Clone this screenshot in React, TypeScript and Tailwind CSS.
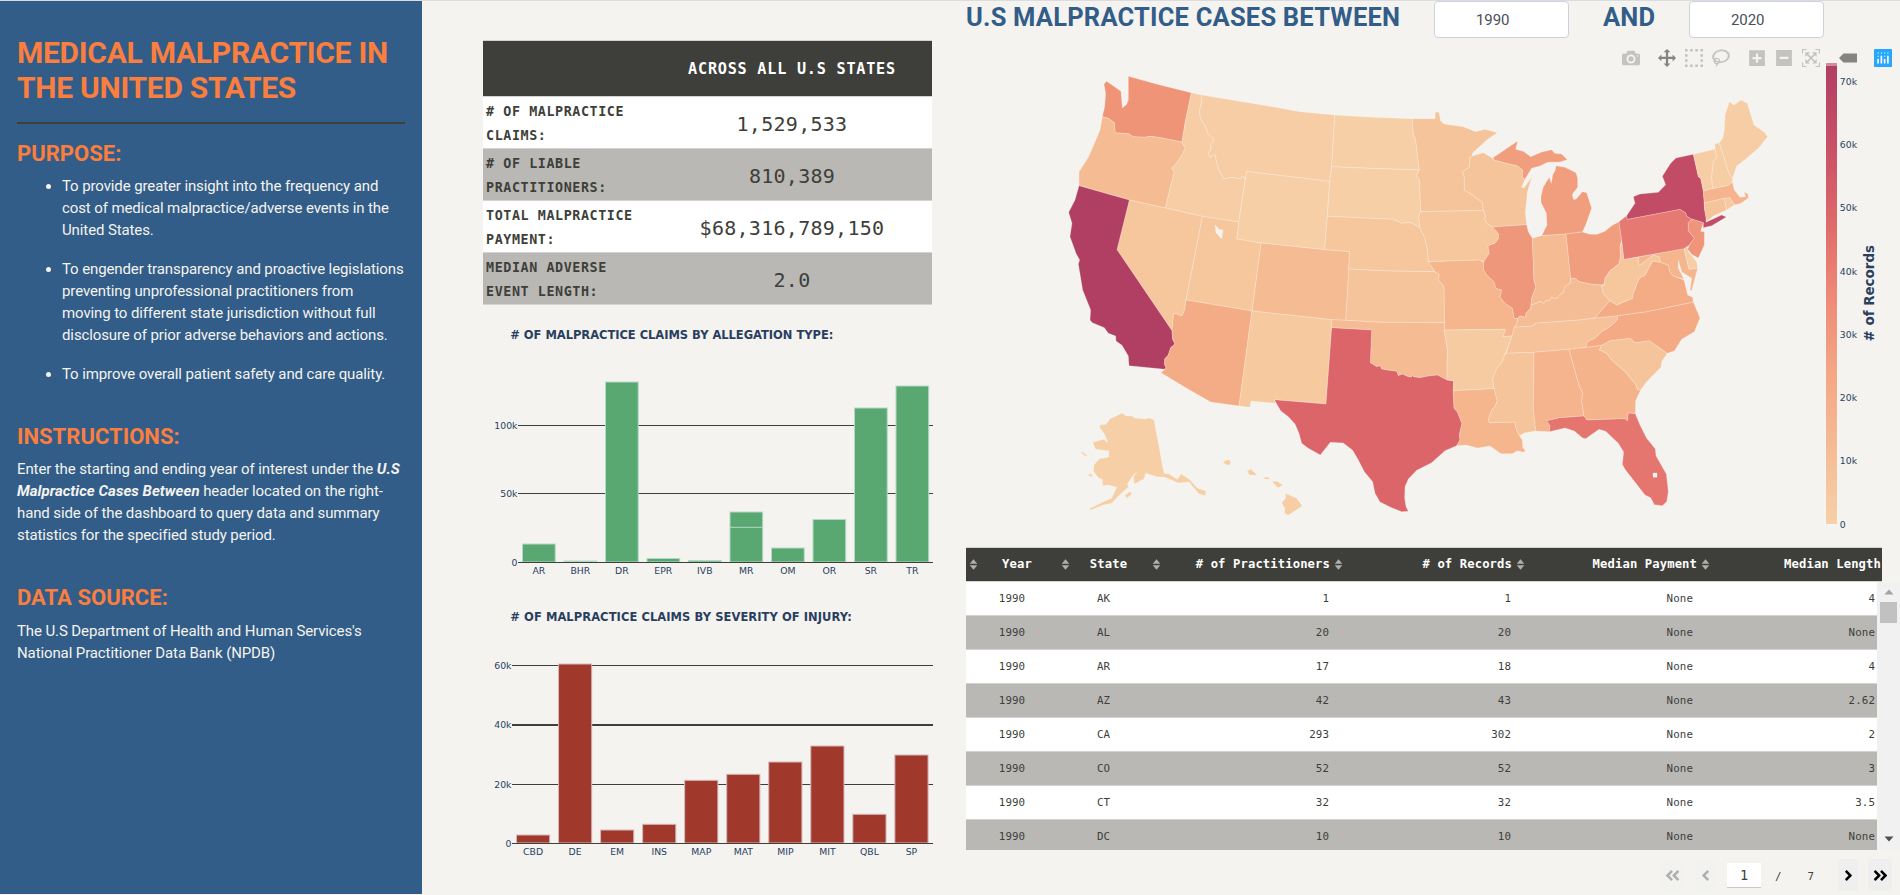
import React from "react";
import {
  FaAngleDoubleLeft,
  FaAngleDoubleRight,
  FaAngleLeft,
  FaAngleRight,
} from "react-icons/fa";

type Bar = { label: string; top: number; split?: number };

type State = { id: string; fill: string; d: string };

const MAP_STATES: State[] = [
  { id: "WA", fill: "#f09478", d: "M162 72L170 64L213 94L217 144L230 133L235 120L235 49L330 75L424 98L405 190L396 246L350 237L325 232L300 229L285 232L250 230L235 221L200 219L195 215L193 188L175 175L157 170L164 140L167 100Z" },
  { id: "OR", fill: "#f5bc94", d: "M157 170L175 175L193 188L195 215L200 219L235 221L250 230L285 232L300 229L325 232L350 237L396 246L406 265L400 278L385 303L366 325L373 338L360 385L347 444L238 420L87 377L87 335L115 292L132 253L150 210Z" },
  { id: "ID", fill: "#f6cda5", d: "M424 98L456 105L455 125L448 155L453 180L465 195L474 220L487 233L493 238L483 250L482 270L475 280L480 291L495 283L501 310L507 330L515 345L520 357L545 352L570 355L580 349L586 358L566 486L457 469L347 444L360 385L373 338L366 325L385 303L400 278L406 265L396 246L405 190Z" },
  { id: "MT", fill: "#f6cda5", d: "M456 105L550 121L650 137L750 155L854 165L845 320L839 364L590 334L586 358L580 349L570 355L545 352L520 357L515 345L507 330L501 310L495 283L480 291L475 280L482 270L483 250L493 238L487 233L474 220L465 195L453 180L448 155L455 125Z" },
  { id: "WY", fill: "#f6cfa6", d: "M590 334L839 364L832 469L824 569L633 549L560 537L566 486Z" },
  { id: "ND", fill: "#f6cfa6", d: "M854 165L970 172L1087 176L1090 220L1097 240L1103 290L1108 330L960 325L845 320Z" },
  { id: "SD", fill: "#f6cfa6", d: "M845 320L960 325L1108 330L1099 348L1109 360L1112 455L1106 468L1110 505L1100 498L1080 487L1055 490L1030 478L832 469L839 364Z" },
  { id: "NE", fill: "#f6c79d", d: "M832 469L1030 478L1055 490L1080 487L1100 498L1110 505L1125 535L1133 570L1135 605L1155 635L1010 633L896 627L898 575L824 569Z" },
  { id: "KS", fill: "#f5c49a", d: "M896 627L1010 633L1155 635L1168 643L1165 660L1182 678L1184 788L990 787L887 781Z" },
  { id: "CO", fill: "#f5bb93", d: "M633 549L824 569L898 575L896 627L887 781L845 779L606 753Z" },
  { id: "UT", fill: "#f6c79d", d: "M457 469L566 486L560 537L633 549L606 753L408 720ZM495 495L498 518L515 537L519 509L510 510Z" },
  { id: "NV", fill: "#f6c79d", d: "M238 420L347 444L457 469L408 720L404 750L396 768L373 760L370 770L366 812L201 569Z" },
  { id: "CA", fill: "#b13f63", d: "M87 377L238 420L201 569L366 812L368 838L375 852L362 863L355 885L344 897L344 915L348 922L345 928L237 917L235 888L216 856L198 843L197 828L175 820L163 803L127 788L120 780L122 750L98 690L85 612L89 600L78 580L60 530L66 490L56 457L75 420Z" },
  { id: "AZ", fill: "#f4ac86", d: "M408 720L606 753L567 1038L482 1026L410 985L333 938L345 928L348 922L344 915L344 897L355 885L362 863L375 852L368 838L366 812L370 770L373 760L396 768L404 750Z" },
  { id: "NM", fill: "#f6c99f", d: "M606 753L845 779L845 803L828 1032L673 1019L675 1030L603 1023L600 1042L567 1038Z" },
  { id: "OK", fill: "#f5bb93", d: "M845 779L887 781L990 787L1184 788L1183 810L1192 870L1191 960L1162 945L1130 949L1110 953L1090 950L1087 946L1084 951L1075 950L1057 942L1045 947L1040 934L1010 930L995 927L990 917L980 920L961 908L965 810L845 803Z" },
  { id: "TX", fill: "#dc656a", d: "M845 803L965 810L961 908L980 920L990 917L995 927L1010 930L1040 934L1045 947L1057 942L1075 950L1084 951L1087 946L1090 950L1110 953L1130 949L1162 945L1191 960L1211 962L1210 992L1212 1045L1222 1055L1236 1090L1228 1125L1230 1140L1220 1157L1185 1172L1145 1208L1100 1231L1075 1257L1065 1280L1064 1315L1068 1340L1075 1354L1055 1355L1025 1343L990 1326L975 1300L968 1265L943 1235L925 1200L908 1171L880 1149L841 1147L811 1185L775 1165L755 1150L747 1120L735 1092L715 1070L692 1052L673 1019L828 1032Z" },
  { id: "MN", fill: "#f5c49a", d: "M1087 176L1155 176L1156 156L1167 157L1172 183L1183 192L1240 200L1277 215L1305 208L1342 218L1310 240L1267 280L1267 288L1259 293L1258 322L1238 335L1243 352L1243 390L1265 403L1298 428L1300 451L1112 455L1109 360L1099 348L1108 330L1103 290L1097 240L1090 220Z" },
  { id: "IA", fill: "#f6c79d", d: "M1112 455L1300 451L1307 468L1304 478L1310 490L1328 501L1346 522L1345 537L1335 550L1314 557L1318 580L1301 605L1290 600L1135 605L1133 570L1125 535L1110 505L1106 468Z" },
  { id: "WI", fill: "#f5c49a", d: "M1267 288L1300 278L1325 293L1333 300L1370 310L1402 317L1418 330L1417 352L1425 358L1415 382L1422 384L1446 350L1432 395L1426 460L1430 494L1328 501L1310 490L1304 478L1307 468L1300 451L1298 428L1265 403L1243 390L1243 352L1238 335L1258 322L1259 293Z" },
  { id: "MI", fill: "#f19e7e", d: "M1329 293L1403 243L1397 268L1420 274L1442 290L1475 276L1505 269L1514 280L1535 282L1552 299L1530 306L1493 307L1470 318L1445 325L1425 358L1417 352L1418 330L1402 317L1370 310L1333 300ZM1518 317L1545 322L1578 338L1583 355L1583 382L1567 403L1570 418L1578 418L1597 395L1610 398L1625 445L1607 495L1597 516L1548 522L1475 527L1491 495L1489 460L1473 427L1473 408L1480 380L1498 352L1504 370L1508 345L1516 330Z" },
  { id: "MO", fill: "#f5b58d", d: "M1135 605L1290 600L1301 608L1301 630L1310 645L1332 665L1338 685L1355 690L1350 712L1365 730L1387 745L1393 775L1403 775L1401 790L1393 802L1386 828L1359 830L1366 808L1183 810L1184 788L1182 678L1165 660L1168 643L1155 635Z" },
  { id: "IL", fill: "#ef977a", d: "M1328 501L1430 494L1435 515L1447 535L1452 660L1458 680L1445 715L1443 735L1442 745L1428 760L1427 772L1410 768L1403 775L1393 775L1387 745L1365 730L1350 712L1355 690L1338 685L1332 665L1310 645L1301 630L1301 605L1318 580L1314 557L1335 550L1345 537L1346 522Z" },
  { id: "IN", fill: "#f5bb93", d: "M1447 535L1475 527L1548 522L1562 655L1562 668L1545 680L1540 695L1525 710L1518 717L1505 711L1499 723L1490 720L1480 730L1470 724L1460 730L1443 735L1445 715L1458 680L1452 660Z" },
  { id: "OH", fill: "#f19e7e", d: "M1548 522L1597 516L1620 523L1642 523L1665 514L1685 497L1707 485L1715 540L1710 560L1712 590L1707 612L1680 632L1665 655L1663 673L1655 675L1620 672L1588 665L1575 655L1562 655Z" },
  { id: "KY", fill: "#f5bd95", d: "M1403 775L1410 768L1427 772L1428 760L1442 745L1443 735L1460 730L1470 724L1480 730L1490 720L1499 723L1505 711L1518 717L1525 710L1540 695L1545 680L1562 668L1562 655L1575 655L1588 665L1620 672L1655 675L1655 680L1660 700L1680 722L1655 750L1635 774L1590 780L1455 790L1450 798L1393 802L1401 790Z" },
  { id: "TN", fill: "#f5c29a", d: "M1393 802L1450 798L1455 790L1590 780L1635 774L1702 767L1702 780L1680 800L1655 815L1635 835L1612 845L1608 862L1557 868L1452 877L1368 880L1380 845L1386 828Z" },
  { id: "AR", fill: "#f6cba2", d: "M1183 810L1366 808L1359 830L1386 828L1380 845L1368 875L1362 890L1355 910L1340 925L1328 955L1332 986L1210 992L1211 962L1191 960L1192 870Z" },
  { id: "LA", fill: "#f5b58d", d: "M1210 992L1332 986L1342 1022L1335 1040L1325 1050L1315 1078L1318 1088L1395 1086L1398 1105L1408 1127L1417 1140L1418 1162L1426 1172L1420 1177L1402 1172L1387 1181L1353 1181L1320 1158L1282 1164L1248 1155L1220 1157L1230 1140L1228 1125L1236 1090L1222 1055L1212 1045Z" },
  { id: "MS", fill: "#f5c49a", d: "M1368 880L1452 877L1450 1045L1457 1113L1425 1118L1408 1127L1398 1105L1395 1086L1318 1088L1315 1078L1325 1050L1335 1040L1342 1022L1332 986L1328 955L1340 925L1355 910L1362 890Z" },
  { id: "AL", fill: "#f5b48d", d: "M1452 877L1557 868L1587 975L1598 1000L1595 1025L1602 1068L1530 1073L1490 1082L1500 1097L1498 1115L1457 1113L1450 1045Z" },
  { id: "GA", fill: "#f5b38c", d: "M1557 868L1608 862L1655 856L1648 870L1670 880L1685 900L1725 935L1738 950L1758 975L1762 988L1772 990L1757 1022L1756 1061L1735 1059L1733 1083L1725 1076L1610 1080L1602 1068L1595 1025L1598 1000L1587 975Z" },
  { id: "FL", fill: "#e5766f", d: "M1490 1082L1530 1073L1602 1068L1610 1080L1725 1076L1733 1083L1735 1059L1756 1061L1770 1095L1790 1135L1816 1167L1818 1187L1849 1242L1855 1295L1850 1325L1837 1337L1813 1334L1802 1313L1785 1305L1725 1228L1717 1213L1721 1176L1705 1150L1667 1114L1647 1108L1607 1136L1598 1134L1573 1113L1545 1104L1498 1115L1500 1097ZM1809 1239L1809 1252L1821 1252L1821 1239Z" },
  { id: "SC", fill: "#f5c49a", d: "M1655 856L1680 842L1740 835L1755 848L1798 842L1852 880L1835 905L1833 922L1790 965L1772 990L1762 988L1758 975L1738 950L1725 935L1685 900L1670 880L1648 870Z" },
  { id: "NC", fill: "#f4aa84", d: "M1702 767L1790 755L1930 726L1950 774L1933 815L1895 838L1873 873L1852 880L1798 842L1755 848L1740 835L1680 842L1655 856L1608 862L1612 845L1635 835L1655 815L1680 800L1702 780Z" },
  { id: "VA", fill: "#f4ac86", d: "M1680 722L1700 735L1747 715L1750 700L1767 655L1785 645L1808 603L1832 607L1855 615L1860 635L1870 648L1902 660L1913 705L1928 712L1930 726L1790 755L1702 767L1635 774L1655 750Z" },
  { id: "WV", fill: "#f6c79d", d: "M1715 548L1722 598L1765 591L1767 617L1790 600L1810 585L1828 590L1832 607L1808 603L1785 645L1767 655L1750 700L1747 715L1700 735L1680 722L1660 700L1655 680L1663 673L1665 655L1680 632L1707 612L1712 590L1710 560Z" },
  { id: "MD", fill: "#f5b58d", d: "M1765 591L1902 566L1917 628L1943 624L1935 655L1925 692L1920 690L1925 655L1895 635L1885 600L1885 625L1902 658L1870 648L1860 635L1855 615L1832 607L1828 590L1810 585L1790 600L1767 617Z" },
  { id: "DE", fill: "#f6cda5", d: "M1902 566L1913 562L1915 575L1940 605L1943 624L1917 628Z" },
  { id: "PA", fill: "#e67972", d: "M1707 485L1730 467L1732 478L1890 448L1907 458L1910 468L1925 477L1915 490L1915 512L1933 535L1918 555L1902 566L1722 598L1715 540Z" },
  { id: "NY", fill: "#c24b65", d: "M1730 467L1755 430L1750 410L1770 402L1825 397L1847 374L1837 349L1862 310L1878 294L1930 283L1938 318L1945 350L1952 355L1960 393L1964 450L1968 470L1968 487L2015 465L2029 471L1985 497L1960 503L1960 488L1925 477L1910 468L1907 458L1890 448L1732 478Z" },
  { id: "NJ", fill: "#f0957a", d: "M1925 477L1960 488L1952 514L1963 515L1963 555L1945 594L1925 583L1913 568L1918 555L1933 535L1915 512L1915 490Z" },
  { id: "VT", fill: "#f6cda5", d: "M1930 283L1995 267L2000 290L1990 305L1985 350L1988 386L1960 393L1952 355L1945 350L1938 318Z" },
  { id: "NH", fill: "#f6cda5", d: "M1995 267L1995 252L2008 248L2037 340L2048 355L2047 366L2033 377L1988 386L1985 350L1990 305L2000 290Z" },
  { id: "ME", fill: "#f6cda5", d: "M2008 248L2018 235L2023 210L2025 165L2038 125L2052 135L2073 120L2092 130L2112 195L2143 217L2153 230L2125 265L2090 295L2060 318L2048 355L2037 340Z" },
  { id: "MA", fill: "#f5b48d", d: "M1960 393L1988 386L2033 377L2047 366L2053 390L2070 412L2087 410L2082 396L2094 402L2095 414L2073 430L2053 435L2040 413L2023 415L1963 429Z" },
  { id: "CT", fill: "#f5c49a", d: "M1963 429L2023 415L2030 450L1990 468L1970 484L1964 450Z" },
  { id: "RI", fill: "#f6c99f", d: "M2023 415L2040 413L2053 435L2030 450Z" },
  { id: "AK", fill: "#f6cfa6", d: "M148 1100L152 1094L168 1093L180 1076L200 1067L217 1059L228 1068L245 1067L252 1073L285 1077L298 1074L312 1079L342 1240L358 1242L382 1258L393 1241L417 1257L443 1285L467 1292L467 1307L447 1302L417 1266L385 1269L345 1252L320 1250L287 1240L282 1257L253 1272L250 1250L260 1237L248 1248L232 1272L236 1280L205 1308L185 1330L160 1335L122 1350L118 1346L160 1325L185 1315L200 1282L175 1275L158 1277L157 1258L145 1253L130 1233L132 1215L148 1196L175 1192L177 1173L137 1168L128 1147L160 1138L173 1147L165 1125ZM225 1305L240 1295L246 1302L230 1315ZM91 1175L100 1177L113 1188L105 1188ZM113 1243L125 1242L129 1250L120 1250Z" },
  { id: "HI", fill: "#f6cda5", d: "M518 1207L532 1199L541 1201L541 1213L532 1216ZM591 1234L603 1227L621 1246L599 1245ZM637 1255L650 1251L664 1256L650 1258ZM666 1265L680 1263L699 1275L684 1284ZM706 1300L740 1315L757 1338L715 1366L704 1360L704 1345L695 1328L707 1315Z" },
];

const COLORBAR_TICKS = [
  { y: 85, label: "70k" },
  { y: 148, label: "60k" },
  { y: 211, label: "50k" },
  { y: 274.5, label: "40k" },
  { y: 338, label: "30k" },
  { y: 401, label: "20k" },
  { y: 464, label: "10k" },
  { y: 528, label: "0" },
];

const ALLEGATION: Bar[] = [
  { label: "AR", top: 544 },
  { label: "BHR", top: 561 },
  { label: "DR", top: 382 },
  { label: "EPR", top: 558.5 },
  { label: "IVB", top: 560.5 },
  { label: "MR", top: 512, split: 527.3 },
  { label: "OM", top: 548 },
  { label: "OR", top: 519.5 },
  { label: "SR", top: 408 },
  { label: "TR", top: 386 },
];

const SEVERITY: Bar[] = [
  { label: "CBD", top: 835 },
  { label: "DE", top: 664 },
  { label: "EM", top: 830 },
  { label: "INS", top: 824.3 },
  { label: "MAP", top: 780.3 },
  { label: "MAT", top: 774.3 },
  { label: "MIP", top: 762 },
  { label: "MIT", top: 746 },
  { label: "QBL", top: 814.3 },
  { label: "SP", top: 755 },
];

const SUMMARY = [
  { label: ["# OF MALPRACTICE", "CLAIMS:"], value: "1,529,533" },
  { label: ["# OF LIABLE", "PRACTITIONERS:"], value: "810,389" },
  { label: ["TOTAL MALPRACTICE", "PAYMENT:"], value: "$68,316,789,150" },
  { label: ["MEDIAN ADVERSE", "EVENT LENGTH:"], value: "2.0" },
];

const ROWS = [
  ["1990", "AK", "1", "1", "None", "4"],
  ["1990", "AL", "20", "20", "None", "None"],
  ["1990", "AR", "17", "18", "None", "4"],
  ["1990", "AZ", "42", "43", "None", "2.62"],
  ["1990", "CA", "293", "302", "None", "2"],
  ["1990", "CO", "52", "52", "None", "3"],
  ["1990", "CT", "32", "32", "None", "3.5"],
  ["1990", "DC", "10", "10", "None", "None"],
];

const HEADERS = ["Year", "State", "# of Practitioners", "# of Records", "Median Payment", "Median Length"];

const HEADING = "font-bold text-[#fa7e3e] text-[22px] leading-[26px] tracking-[0.03px]";

function Sidebar() {
  return (
    <aside className="h-[893px] w-[422px] shrink-0 bg-[#325d88] pl-[17px] pr-[17px] pt-[34px] font-['Roboto',sans-serif] text-[15px] leading-[22px] tracking-[-0.11px] text-[#f4f3ef]">
      <h1 className="whitespace-nowrap text-[30px] font-bold leading-[35px] tracking-[-0.27px] text-[#fa7e3e]">
        MEDICAL MALPRACTICE IN
        <br />
        THE UNITED STATES
      </h1>
      <hr className="mt-[17px] h-[2px] border-0 bg-[#3e3f3a]" />
      <h2 className={`mt-[17px] ${HEADING}`}>PURPOSE:</h2>
      <ul className="mt-[8px] flex list-disc flex-col gap-[17px] whitespace-nowrap pl-[45px]">
        <li>
          To provide greater insight into the frequency and
          <br />
          cost of medical malpractice/adverse events in the
          <br />
          United States.
        </li>
        <li>
          To engender transparency and proactive legislations
          <br />
          preventing unprofessional practitioners from
          <br />
          moving to different state jurisdiction without full
          <br />
          disclosure of prior adverse behaviors and actions.
        </li>
        <li>To improve overall patient safety and care quality.</li>
      </ul>
      <h2 className={`mt-[39px] ${HEADING}`}>INSTRUCTIONS:</h2>
      <p className="mt-[8px] whitespace-nowrap">
        Enter the starting and ending year of interest under the{" "}
        <b className="italic tracking-[0.05px]">
          U.S
          <br />
          Malpractice Cases Between
        </b>{" "}
        header located on the right-
        <br />
        hand side of the dashboard to query data and summary
        <br />
        statistics for the specified study period.
      </p>
      <h2 className={`mt-[39px] ${HEADING}`}>DATA SOURCE:</h2>
      <p className="mt-[9px] whitespace-nowrap">
        The U.S Department of Health and Human Services's
        <br />
        National Practitioner Data Bank (NPDB)
      </p>
    </aside>
  );
}

function SummaryTable() {
  return (
    <div className="ml-[61px] mt-[39px] w-[449px] border-t border-[#d3d3d3] font-['DejaVu_Sans_Mono',monospace] text-[#3e3f3a]">
      <div className="flex h-[56px] items-center border-b border-[#d3d3d3] bg-[#3e3f3a]">
        <div className="w-[169px]" />
        <div className="flex-1 pt-px text-center text-[15.2px] font-bold tracking-[0.75px] text-white">
          ACROSS ALL U.S STATES
        </div>
      </div>
      {SUMMARY.map((row, i) => (
        <div
          key={row.value}
          className={`flex h-[52px] items-center border-b border-[#d3d3d3] ${i % 2 ? "bg-[#b9b8b4]" : "bg-white"}`}
        >
          <div className="w-[169px] whitespace-nowrap pl-[3px] pt-[3px] text-[13.4px] font-bold leading-[24px] tracking-[0.57px]">
            {row.label[0]}
            <br />
            {row.label[1]}
          </div>
          <div className="flex-1 pt-[3px] text-center text-[20px] tracking-[0.28px]">{row.value}</div>
        </div>
      ))}
    </div>
  );
}

type BarChartProps = {
  viewBox: string;
  height: string;
  title: string;
  titleY: number;
  titleWidth: number;
  bars: Bar[];
  x0: number;
  step: number;
  barWidth: number;
  base: number;
  axisX: number;
  fill: string;
  edge: string;
  ticks: { y: number; label: string; weight?: number }[];
};

function BarChart(p: BarChartProps) {
  return (
    <svg
      viewBox={p.viewBox}
      className={`w-[530px] ${p.height} block font-['Verdana','DejaVu_Sans',sans-serif]`}
      fill="#2a3f5f"
    >
      <text x="510.3" y={p.titleY} fontSize="11.5" fontWeight="700" textLength={p.titleWidth}>
        {p.title}
      </text>
      {p.ticks.map((t) => (
        <g key={t.label}>
          <rect x={p.axisX} y={t.y} width={933 - p.axisX} height={t.weight ?? 1} fill="#3e3f3a" />
          <text x={p.axisX - 0.5} y={t.y + 3.8} fontSize="9.3" textAnchor="end">
            {t.label}
          </text>
        </g>
      ))}
      {p.bars.map((b, i) => {
        const x = p.x0 + i * p.step;
        return (
          <g key={b.label}>
            <rect
              x={x}
              y={b.top}
              width={p.barWidth}
              height={p.base - b.top}
              fill={p.fill}
              stroke={p.edge}
            />
            {b.split && <rect x={x} y={b.split - 0.5} width={p.barWidth} height="1" fill={p.edge} />}
            <text x={x + p.barWidth / 2} y={p.base + 12} fontSize="9.3" textAnchor="middle">
              {b.label}
            </text>
          </g>
        );
      })}
      <rect x={p.axisX} y={p.base} width={933 - p.axisX} height="1" fill="#3e3f3a" />
    </svg>
  );
}

const ICONS = {
  camera:
    "m500 450c-83 0-150-67-150-150 0-83 67-150 150-150 83 0 150 67 150 150 0 83-67 150-150 150z m400 150h-120c-16 0-34 13-39 29l-31 93c-6 15-23 28-40 28h-340c-16 0-34-13-39-28l-31-94c-6-15-23-28-40-28h-120c-55 0-100-45-100-100v-450c0-55 45-100 100-100h800c55 0 100 45 100 100v450c0 55-45 100-100 100z m-400-550c-138 0-250 112-250 250 0 138 112 250 250 250 138 0 250-112 250-250 0-138-112-250-250-250z m365 380c-19 0-35 16-35 35 0 19 16 35 35 35 19 0 35-16 35-35 0-19-16-35-35-35z",
  pan: "m1000 350l-187 188 0-125-250 0 0 250 125 0-188 187-187-187 125 0 0-250-250 0 0 125-188-188 186-187 0 125 252 0 0-250-125 0 187-188 188 188-125 0 0 250 250 0 0-126 187 188z",
  select:
    "M0 850h143v-143h-143zM286 850h143v-143h-143zM571 850h143v-143h-143zM857 850h143v-143h-143zM0 564h143v-143h-143zM857 564h143v-143h-143zM0 279h143v-143h-143zM857 279h143v-143h-143zM0 -7h143v-143h-143zM286 -7h143v-143h-143zM571 -7h143v-143h-143zM857 -7h143v-143h-143z",
  lasso:
    "m1018 538c-36 207-290 336-568 286-277-48-473-256-436-463 10-57 36-108 76-151-13-66 11-137 68-183 34-28 75-41 114-42l-55-70 0 0c-2-1-3-2-4-3-10-14-8-34 5-45 14-11 34-8 45 4 1 1 2 3 2 5l0 0 113 140c16 11 31 24 45 40 4 3 6 7 8 11 48-3 100 0 151 9 278 48 473 255 436 462z m-624-379c-80 14-149 48-197 96 42 42 109 47 156 9 33-26 47-66 41-105z m-187-74c-19 16-33 37-39 60 50-32 109-55 174-68-42-25-95-24-135 8z m360 75c-34-7-69-9-102-8 8 62-16 128-68 170-73 59-175 54-244-5-9 20-16 40-20 61-28 159 121 317 333 354s407-60 434-217c28-159-121-318-333-355z",
  zoomIn:
    "m1 787l0-875 875 0 0 875-875 0z m687-500l-187 0 0-187-125 0 0 187-188 0 0 125 188 0 0 187 125 0 0-187 187 0 0-125z",
  zoomOut: "m0 788l0-876 875 0 0 876-875 0z m688-500l-500 0 0 125 500 0 0-125z",
  autoscale:
    "m250 850l-187 0-63 0 0-62 0-188 63 0 0 188 187 0 0 62z m688 0l-188 0 0-62 188 0 0-188 62 0 0 188 0 62-62 0z m-875-938l0 188-63 0 0-188 0-62 63 0 187 0 0 62-187 0z m875 188l0-188-188 0 0-62 188 0 62 0 0 62 0 188-62 0z m-125 188l-1 0-93-94-156 156 156 156 92-93 2 0 0 250-250 0 0-2 93-92-156-156-156 156 94 92 0 2-250 0 0-250 0 0 93 93 157-156-157-156-93 94 0 0 0-250 250 0 0 0-94 93 156 157 156-157-93-93 0 0 250 0 0 250z",
  tooltip: "m375 725l0 0-375-375 375-374 0-1 1125 0 0 750-1125 0z",
};

function ToolIcon({ d, width, className }: { d: string; width: number; className: string }) {
  return (
    <svg viewBox={`0 0 ${width} 1000`} className={`h-[18px] w-[18px] ${className}`}>
      <path d={d} transform="matrix(1 0 0 -1 0 850)" fill="currentColor" />
    </svg>
  );
}

function Modebar() {
  return (
    <div className="absolute right-[8px] top-[11px] flex items-center text-[#c4c3c1]">
      <ToolIcon d={ICONS.camera} width={1000} className="mr-[18px]" />
      <ToolIcon d={ICONS.pan} width={1000} className="mr-[9px] text-[#858481]" />
      <ToolIcon d={ICONS.select} width={1000} className="mr-[9px]" />
      <ToolIcon d={ICONS.lasso} width={1031} className="mr-[18px]" />
      <ToolIcon d={ICONS.zoomIn} width={875} className="mr-[9px]" />
      <ToolIcon d={ICONS.zoomOut} width={875} className="mr-[9px]" />
      <ToolIcon d={ICONS.autoscale} width={1000} className="mr-[19px]" />
      <ToolIcon d={ICONS.tooltip} width={1500} className="mr-[17px] text-[#858481]" />
      <svg viewBox="0 0 132 132" className="h-[18px] w-[18px]">
        <rect width="132" height="132" rx="3" fill="#28a5ff" />
        <g fill="#7ff0ff">
          <circle cx="78" cy="54" r="6" />
          <circle cx="102" cy="30" r="6" />
          <circle cx="78" cy="30" r="6" />
          <circle cx="54" cy="30" r="6" />
          <circle cx="30" cy="30" r="6" />
          <circle cx="30" cy="54" r="6" />
        </g>
        <g stroke="#fff" strokeWidth="12" strokeLinecap="round">
          <path d="M30 78V102M78 78V102M54 54V102M102 54V102" />
        </g>
      </svg>
    </div>
  );
}

function ChoroplethMap() {
  return (
    <div className="relative h-[509px] w-[934px]">
      <svg viewBox="966 38 934 509" className="block h-[509px] w-[934px] font-['Verdana','DejaVu_Sans',sans-serif]">
        <defs>
          <linearGradient id="records" x1="0" y1="1" x2="0" y2="0">
            <stop offset="0" stopColor="#f6d0a8" />
            <stop offset="0.17" stopColor="#f5bb93" />
            <stop offset="0.33" stopColor="#f4a783" />
            <stop offset="0.5" stopColor="#ed8977" />
            <stop offset="0.58" stopColor="#e7796f" />
            <stop offset="0.67" stopColor="#dc676a" />
            <stop offset="0.83" stopColor="#c85066" />
            <stop offset="1" stopColor="#b13f63" />
          </linearGradient>
        </defs>
        <g transform="translate(1050 60) scale(0.333333)" stroke="#fff" strokeOpacity="0.23" strokeWidth="3" strokeLinejoin="round">
          {MAP_STATES.map((s) => (
            <path key={s.id} d={s.d} fill={s.fill} fillRule="evenodd" />
          ))}
        </g>
        <rect x="1825.5" y="62.5" width="12" height="462" fill="#fff" fillOpacity="0.5" />
        <rect x="1826" y="63" width="11" height="3" fill="#cf8ea0" />
        <rect x="1826" y="66" width="11" height="458" fill="url(#records)" />
        <g fill="#2a3f5f" fontSize="9.3">
          {COLORBAR_TICKS.map((t) => (
            <text key={t.label} x="1839.8" y={t.y}>
              {t.label}
            </text>
          ))}
          <text
            transform="translate(1873.6 341.5) rotate(-90)"
            fontSize="14"
            fontWeight="700"
            textLength="96.5"
            lengthAdjust="spacingAndGlyphs"
          >
            # of Records
          </text>
        </g>
      </svg>
      <Modebar />
    </div>
  );
}

function SortIcon() {
  return (
    <svg viewBox="0 0 9 11" className="h-[11px] w-[9px] shrink-0" fill="#b0afac">
      <path d="M4.5 0.3L8.3 4.7H0.7ZM0.7 6.3H8.3L4.5 10.7Z" />
    </svg>
  );
}

function DataTable() {
  return (
    <div className="h-[303px] w-[934px] font-['DejaVu_Sans_Mono',monospace] text-[#3e3f3a]">
      <div className="grid h-[35px] w-[916px] grid-cols-[92px_91px_182px_182px_185px_184px] items-center border-y border-[#d3d3d3] bg-[#3e3f3a] text-[12.2px] font-bold tracking-[0.12px] text-white">
        {HEADERS.map((h, i) => (
          <div key={h} className="flex items-center whitespace-nowrap pl-[3px] pr-px">
            <SortIcon />
            <span className={i < 2 ? "flex-1 pr-px text-center" : "ml-auto"}>{h}</span>
          </div>
        ))}
      </div>
      <div className="flex h-[268px] overflow-hidden">
        <div className="w-[911px]">
          {ROWS.map((r, i) => (
            <div
              key={r[1]}
              className={`grid h-[34px] grid-cols-[92px_91px_182px_182px_182px_182px] items-center border-b border-[#d3d3d3] pt-[2px] text-[10.8px] tracking-[0.1px] ${i % 2 ? "bg-[#b9b8b4]" : "bg-white"}`}
            >
              {r.map((c, j) => (
                <div key={j} className={j < 2 ? "text-center" : "pr-[2px] text-right"}>
                  {c}
                </div>
              ))}
            </div>
          ))}
        </div>
        <div className="flex flex-1 flex-col items-center bg-[#f1f1f1] pt-[7px]">
          <svg viewBox="0 0 10 6" className="h-[6px] w-[10px]" fill="#a3a3a3">
            <path d="M5 0.5L9.5 5.5H0.5Z" />
          </svg>
          <div className="mt-[7px] h-[21px] w-[17px] bg-[#c1c1c1]" />
          <svg viewBox="0 0 10 6" className="mb-[8px] mt-auto h-[6px] w-[10px]" fill="#505050">
            <path d="M5 5.5L9.5 0.5H0.5Z" />
          </svg>
        </div>
      </div>
    </div>
  );
}

function Pagination() {
  return (
    <div className="flex h-[32px] items-center pl-[694px] font-['DejaVu_Sans_Mono',monospace] text-[#3e3f3a]">
      <button className="flex h-full w-[24px] items-center justify-center bg-[#f2f2f1] text-[#b0b0af]">
        <FaAngleDoubleLeft size={17} />
      </button>
      <button className="ml-[12px] flex h-full w-[18px] items-center justify-center bg-[#f2f2f1] text-[#b0b0af]">
        <FaAngleLeft size={17} />
      </button>
      <div className="ml-[13px] mt-px flex h-[25px] w-[34px] items-center justify-center border-b border-[#c9c9c9] bg-white pt-px text-[13.5px]">
        1
      </div>
      <span className="ml-[14px] mt-[5px] text-[10.8px]">/</span>
      <span className="ml-[26px] mt-[5px] text-[10.8px]">7</span>
      <button className="ml-[24px] flex h-full w-[20px] items-center justify-center bg-[#efefef] text-black">
        <FaAngleRight size={17} />
      </button>
      <button className="ml-[10px] flex h-full w-[24px] items-center justify-center bg-[#efefef] text-black">
        <FaAngleDoubleRight size={17} />
      </button>
    </div>
  );
}

function YearRange() {
  const input =
    "flex h-[37px] w-[135px] items-center rounded-[4px] border border-[#ced2dc] bg-white pl-[41px] pt-px text-[15px] font-normal tracking-[-0.1px] text-[#495057]";
  return (
    <div className="flex h-[37px] items-start font-['Roboto',sans-serif] text-[25.5px] font-bold text-[#325d88]">
      <span className="w-[468px] whitespace-nowrap leading-[33px] tracking-[0.21px]">U.S MALPRACTICE CASES BETWEEN</span>
      <div className={input}>1990</div>
      <span className="w-[120px] pl-[34px] leading-[33px] tracking-[0.21px]">AND</span>
      <div className={input}>2020</div>
    </div>
  );
}

export default function App() {
  return (
    <div className="flex h-[895px] w-[1900px] overflow-hidden border-t border-[#dadce0] bg-[#f4f3ef]">
      <Sidebar />
      <section className="w-[530px] shrink-0">
        <SummaryTable />
        <BarChart
          viewBox="422 305 530 290"
          height="h-[290px]"
          title="# OF MALPRACTICE CLAIMS BY ALLEGATION TYPE:"
          titleY={339.3}
          titleWidth={323}
          bars={ALLEGATION}
          x0={522.5}
          step={41.5}
          barWidth={32.7}
          base={562}
          axisX={518}
          fill="#59a872"
          edge="#b5d8c6"
          ticks={[
            { y: 425, label: "100k" },
            { y: 493, label: "50k" },
            { y: 562, label: "0" },
          ]}
        />
        <BarChart
          viewBox="422 595 530 290"
          height="h-[290px]"
          title="# OF MALPRACTICE CLAIMS BY SEVERITY OF INJURY:"
          titleY={621.3}
          titleWidth={341.5}
          bars={SEVERITY}
          x0={516.5}
          step={42.04}
          barWidth={33.2}
          base={843}
          axisX={512}
          fill="#a0382c"
          edge="#d3b9bb"
          ticks={[
            { y: 665, label: "60k" },
            { y: 724, label: "40k", weight: 2 },
            { y: 784, label: "20k" },
            { y: 843, label: "0" },
          ]}
        />
      </section>
      <main className="ml-[14px] w-[934px] shrink-0">
        <YearRange />
        <ChoroplethMap />
        <DataTable />
        <div className="h-[9px]" />
        <Pagination />
      </main>
    </div>
  );
}
